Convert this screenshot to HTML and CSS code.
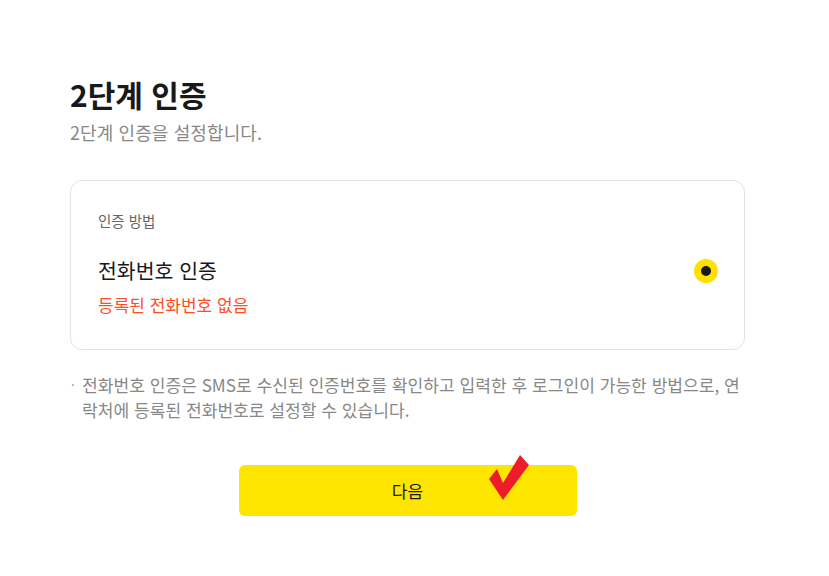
FILE: index.html
```html
<!DOCTYPE html>
<html lang="ko">
<head>
<meta charset="utf-8">
<link rel="stylesheet" href="styles.css">
</head>
<body>
<main class="page">
  <h1 class="title">2단계 인증</h1>
  <p class="subtitle">2단계 인증을 설정합니다.</p>
  <section class="card">
    <div class="card-label">인증 방법</div>
    <div class="option">
      <div class="option-text">
        <div class="option-name">전화번호 인증</div>
        <div class="option-warn">등록된 전화번호 없음</div>
      </div>
      <span class="radio"><span class="radio-dot"></span></span>
    </div>
  </section>
  <p class="note"><span class="bullet">·</span>전화번호 인증은 SMS로 수신된 인증번호를 확인하고 입력한 후 로그인이 가능한 방법으로, 연락처에 등록된 전화번호로 설정할 수 있습니다.</p>
  <div class="actions">
    <button class="btn-next" type="button">다음
      <svg class="check" width="42" height="48" viewBox="0 0 42 48" aria-hidden="true">
        <polygon points="0,24 8,14 14,28 31,0 40,10 14,45" fill="#ec1c2b"/>
      </svg>
    </button>
  </div>
</main>
</body>
</html>
```
FILE: styles.css
```css
* { box-sizing: border-box; }
html, body { margin: 0; padding: 0; background: #fff; }
body {
  font-family: "Noto Sans CJK KR", "Noto Sans", sans-serif;
  color: #191919;
}
.page {
  width: 675px;
  margin-left: 70px;
  padding-top: 74px;
}
.title {
  margin: 0;
  font-size: 30px;
  font-weight: 700;
  line-height: 40px;
  color: #191919;
}
.subtitle {
  margin: 6px 0 0;
  font-size: 18px;
  letter-spacing: 0.1px;
  line-height: 24px;
  color: #888;
}
.card {
  margin-top: 36px;
  border: 1px solid #e3e3e3;
  border-radius: 12px;
  padding: 30px 26px 30px 27px;
  height: 170px;
}
.card-label {
  font-size: 14.5px;
  line-height: 20px;
  color: #666;
}
.option {
  margin-top: 25px;
  display: flex;
  align-items: flex-start;
  justify-content: space-between;
}
.option-name {
  font-size: 20.5px;
  line-height: 28px;
  color: #191919;
}
.option-warn {
  margin-top: 10px;
  font-size: 17px;
  line-height: 22px;
  color: #ff4e1f;
}
.radio {
  margin-top: 3px;
  width: 24px;
  height: 24px;
  border-radius: 50%;
  background: #ffe100;
  display: flex;
  align-items: center;
  justify-content: center;
}
.radio-dot {
  width: 10px;
  height: 10px;
  border-radius: 50%;
  background: #191919;
}
.note {
  margin: 22px 0 0;
  padding-left: 12px;
  text-indent: -12px;
  font-size: 17.1px;
  line-height: 25px;
  color: #888;
  word-break: break-all;
}
.bullet {
  display: inline-block;
  width: 12px;
  text-indent: 0;
  font-size: 13px;
  vertical-align: 2px;
  padding-left: 1px;
}
.actions {
  margin-top: 43px;
  display: flex;
  justify-content: center;
}
.btn-next {
  position: relative;
  width: 338px;
  height: 51px;
  border: 0;
  border-radius: 6px;
  background: #fee500;
  font-family: inherit;
  font-size: 17px;
  color: #191919;
  cursor: pointer;
}
.check {
  position: absolute;
  left: 250px;
  top: -10px;
}
```
